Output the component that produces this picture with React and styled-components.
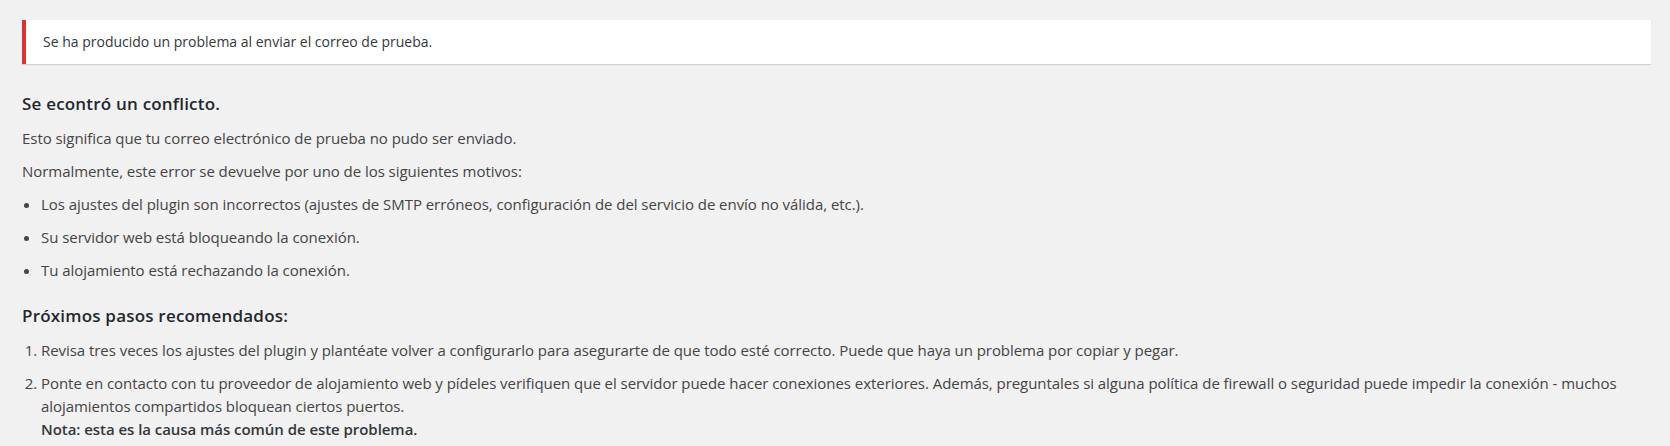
import React from "react";
import styled, { createGlobalStyle } from "styled-components";

const GlobalStyle = createGlobalStyle`
  html, body {
    margin: 0;
    padding: 0;
    background: #f1f1f1;
  }
  body {
    font-family: "Open Sans", "Noto Sans", sans-serif;
    color: #444;
  }
`;

const Page = styled.main`
  padding: 20px 19px 0 22px;
  min-height: 426px;
`;

const Notice = styled.div`
  background: #fff;
  border-left: 4px solid #dc3232;
  box-shadow: 0 1px 1px 0 rgba(0, 0, 0, 0.13);
  padding: 12px 17px;
  margin-bottom: 29px;
  font-size: 14px;
  line-height: 20px;
  color: #32373c;
`;

const Section = styled.section`
  margin-top: ${(p) => (p.$first ? "0" : "23px")};
`;

const Heading = styled.h2`
  margin: 0 0 12px;
  font-size: 17px;
  line-height: 22px;
  font-weight: 600;
  letter-spacing: 0.2px;
  color: #23282d;
`;

const Para = styled.p`
  margin: 0 0 10px;
  font-size: 15px;
  line-height: 23px;
  letter-spacing: -0.05px;
`;

const List = styled.ul`
  margin: 0;
  padding-left: 19px;
  font-size: 15px;
  line-height: 23px;
  letter-spacing: -0.05px;
  list-style: ${(p) => (p.as === "ol" ? "decimal" : "disc")};
`;

const Item = styled.li`
  margin: 0;
  &:not(:last-child) {
    margin-bottom: 10px;
  }
`;

const Strong = styled.strong`
  font-weight: 600;
  color: #32373c;
`;

export default function App() {
  return (
    <>
      <GlobalStyle />
      <Page>
        <Notice>Se ha producido un problema al enviar el correo de prueba.</Notice>
        <Section $first>
          <Heading>Se econtró un conflicto.</Heading>
          <Para>Esto significa que tu correo electrónico de prueba no pudo ser enviado.</Para>
          <Para>Normalmente, este error se devuelve por uno de los siguientes motivos:</Para>
          <List>
            <Item>
              Los ajustes del plugin son incorrectos (ajustes de SMTP erróneos, configuración de del
              servicio de envío no válida, etc.).
            </Item>
            <Item>Su servidor web está bloqueando la conexión.</Item>
            <Item>Tu alojamiento está rechazando la conexión.</Item>
          </List>
        </Section>
        <Section>
          <Heading>Próximos pasos recomendados:</Heading>
          <List as="ol">
            <Item>
              Revisa tres veces los ajustes del plugin y plantéate volver a configurarlo para
              asegurarte de que todo esté correcto. Puede que haya un problema por copiar y pegar.
            </Item>
            <Item>
              Ponte en contacto con tu proveedor de alojamiento web y pídeles verifiquen que el
              servidor puede hacer conexiones exteriores. Además, preguntales si alguna política de
              firewall o seguridad puede impedir la conexión - muchos
              <br />
              alojamientos compartidos bloquean ciertos puertos.
              <br />
              <Strong>Nota: esta es la causa más común de este problema.</Strong>
            </Item>
          </List>
        </Section>
      </Page>
    </>
  );
}
